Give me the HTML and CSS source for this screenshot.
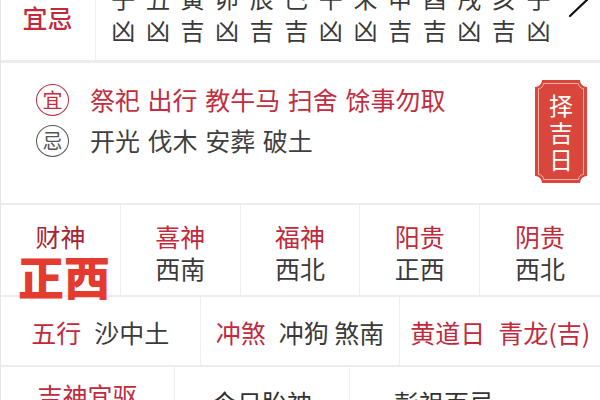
FILE: index.html
```html
<!DOCTYPE html>
<html lang="zh">
<head>
<meta charset="utf-8">
<link rel="stylesheet" href="styles.css">
</head>
<body>
<div class="page">
  <div class="row hours-row">
    <div class="yj-label">宜忌</div>
    <div class="hours">
      <div class="hour-grid">
        <span>子</span><span>丑</span><span>寅</span><span>卯</span><span>辰</span><span>巳</span><span>午</span><span>未</span><span>申</span><span>酉</span><span>戌</span><span>亥</span><span>子</span>
        <span>凶</span><span>凶</span><span>吉</span><span>凶</span><span>吉</span><span>吉</span><span>凶</span><span>凶</span><span>吉</span><span>吉</span><span>凶</span><span>吉</span><span>凶</span>
      </div>
    </div>
    <svg class="chev" width="30" height="60" viewBox="0 0 30 60"><line x1="6" y1="16" x2="26" y2="-3" stroke="#111" stroke-width="2.2" stroke-linecap="round"/></svg>
  </div>

  <div class="row yiji-row">
    <div class="yiji-lines">
      <div class="yl yi"><span class="circ">宜</span><span class="txt">祭祀 出行 教牛马 扫舍 馀事勿取</span></div>
      <div class="yl ji"><span class="circ">忌</span><span class="txt">开光 伐木 安葬 破土</span></div>
    </div>
    <div class="badge">
      <svg class="badge-bg" width="52" height="103" viewBox="0 0 52 103">
        <path d="M7,0 H45 A7,7 0 0 0 52,7 V96 A7,7 0 0 0 45,103 H7 A7,7 0 0 0 0,96 V7 A7,7 0 0 0 7,0 Z" fill="#d9463c"/>
        <path d="M8.5,3.5 H43.5 A5,5 0 0 0 48.5,8.5 V94.5 A5,5 0 0 0 43.5,99.5 H8.5 A5,5 0 0 0 3.5,94.5 V8.5 A5,5 0 0 0 8.5,3.5 Z" fill="none" stroke="#f4b3a8" stroke-width="1"/>
      </svg>
      <span class="bch">择</span><span class="bch">吉</span><span class="bch">日</span>
    </div>
  </div>

  <div class="row gods-row">
    <div class="god cai"><div class="g-label">财神</div><div class="g-big">正西</div></div>
    <div class="god"><div class="g-label">喜神</div><div class="g-val">西南</div></div>
    <div class="god"><div class="g-label">福神</div><div class="g-val">西北</div></div>
    <div class="god"><div class="g-label">阳贵</div><div class="g-val">正西</div></div>
    <div class="god"><div class="g-label">阴贵</div><div class="g-val">西北</div></div>
  </div>

  <div class="row info-row">
    <div class="info"><span class="i-label">五行</span><span class="i-val">沙中土</span></div>
    <div class="info"><span class="i-label">冲煞</span><span class="i-val">冲狗 煞南</span></div>
    <div class="info"><span class="i-label">黄道日</span><span class="i-label red-val">青龙(吉)</span></div>
  </div>

  <div class="row last-row">
    <div class="lc lc1"><span class="l-label">吉神宜驱</span></div>
    <div class="lc lc2"><span class="l-dark">今日胎神</span></div>
    <div class="lc lc3"><span class="l-dark">彭祖百忌</span></div>
  </div>
</div>
</body>
</html>
```

FILE: styles.css
```css
* { box-sizing: border-box; }
html, body { margin: 0; padding: 0; background: #fff; }
body {
  font-family: "Noto Sans CJK SC", "Noto Sans", sans-serif;
  color: #3a3a3a;
  width: 600px;
  height: 400px;
  overflow: hidden;
}
.page {
  width: 600px;
  border-left: 1px solid #e6e6e6;
}
.row { display: flex; }

/* top hours row */
.hours-row {
  height: 63px;
  border-bottom: 3px solid #ededed;
  overflow: hidden;
  align-items: flex-start;
}
.yj-label {
  width: 95px;
  height: 60px;
  border-right: 1px solid #efefef;
  color: #c12a3c;
  font-size: 25px;
  font-weight: 500;
  line-height: 34px;
  text-align: center;
  padding-right: 1px;
}
.hours {
  height: 60px;
  overflow: hidden;
}
.hour-grid {
  display: grid;
  grid-template-columns: repeat(13, 34.6px);
  margin-left: 10px;
  margin-top: -18px;
  font-size: 24px;
  line-height: 32px;
  text-align: center;
  color: #3a3a3a;
}
.chev { margin-left: auto; margin-right: 6px; display: block; }

/* yi ji row */
.yiji-row {
  height: 142px;
  border-bottom: 2px solid #ededed;
  padding-top: 16px;
}
.yiji-lines { flex: 1; padding-left: 35px; }
.yl {
  display: flex;
  align-items: center;
  height: 41px;
}
.circ {
  width: 33px;
  height: 32px;
  border-radius: 50%;
  border: 1.5px solid currentColor;
  display: flex;
  align-items: center;
  justify-content: center;
  font-size: 20px;
  line-height: 1;
  margin-right: 21px;
  flex: 0 0 auto;
}
.txt { font-size: 25px; line-height: 41px; white-space: nowrap; word-spacing: 2px; }
.yi { color: #c22d40; }
.ji { color: #3f3f3f; }
.ji .circ { color: #555; }

.badge {
  position: relative;
  width: 52px;
  height: 103px;
  margin-top: 1px;
  margin-right: 13px;
  display: flex;
  flex-direction: column;
  align-items: center;
  justify-content: center;
  flex: 0 0 auto;
}
.badge-bg { position: absolute; left: 0; top: 0; }
.bch {
  position: relative;
  color: #fff;
  font-size: 24px;
  line-height: 27px;
}

/* gods row */
.gods-row {
  height: 92px;
  border-bottom: 2px solid #ededed;
}
.god {
  width: 120px;
  border-right: 1px solid #efefef;
  text-align: center;
  padding-top: 15px;
}
.god:last-child { border-right: none; }
.g-label { color: #c22a3c; font-size: 25px; line-height: 32px; }
.cai .g-label { color: #a8242f; }
.g-val { color: #3a3a3a; font-size: 25px; line-height: 32px; }
.g-big {
  color: #e53b2f;
  font-size: 46px;
  font-weight: 900;
  line-height: 46px;
  padding-left: 7px;
}

/* info row */
.info-row {
  height: 70px;
  border-bottom: 2px solid #ededed;
}
.info {
  width: 200px;
  border-right: 1px solid #efefef;
  display: flex;
  align-items: center;
  justify-content: center;
  padding-top: 2px;
  font-size: 25px;
  white-space: nowrap;
}
.info:last-child { border-right: none; }
.i-label { color: #c22a3c; margin-right: 13px; }
.i-label.red-val { margin-right: 0; }
.i-val { color: #3a3a3a; }

/* last row */
.last-row { height: 40px; }
.lc {
  border-right: 1px solid #efefef;
  font-size: 25px;
  line-height: 34px;
  white-space: nowrap;
}
.lc1 { width: 174px; text-align: center; padding-top: 11px; }
.lc2 { width: 175px; text-align: center; padding-top: 18px; }
.lc3 { flex: 1; border-right: none; padding-top: 18px; padding-left: 44px; }
.l-label { color: #c22a3c; }
.l-dark { color: #333; }
```
